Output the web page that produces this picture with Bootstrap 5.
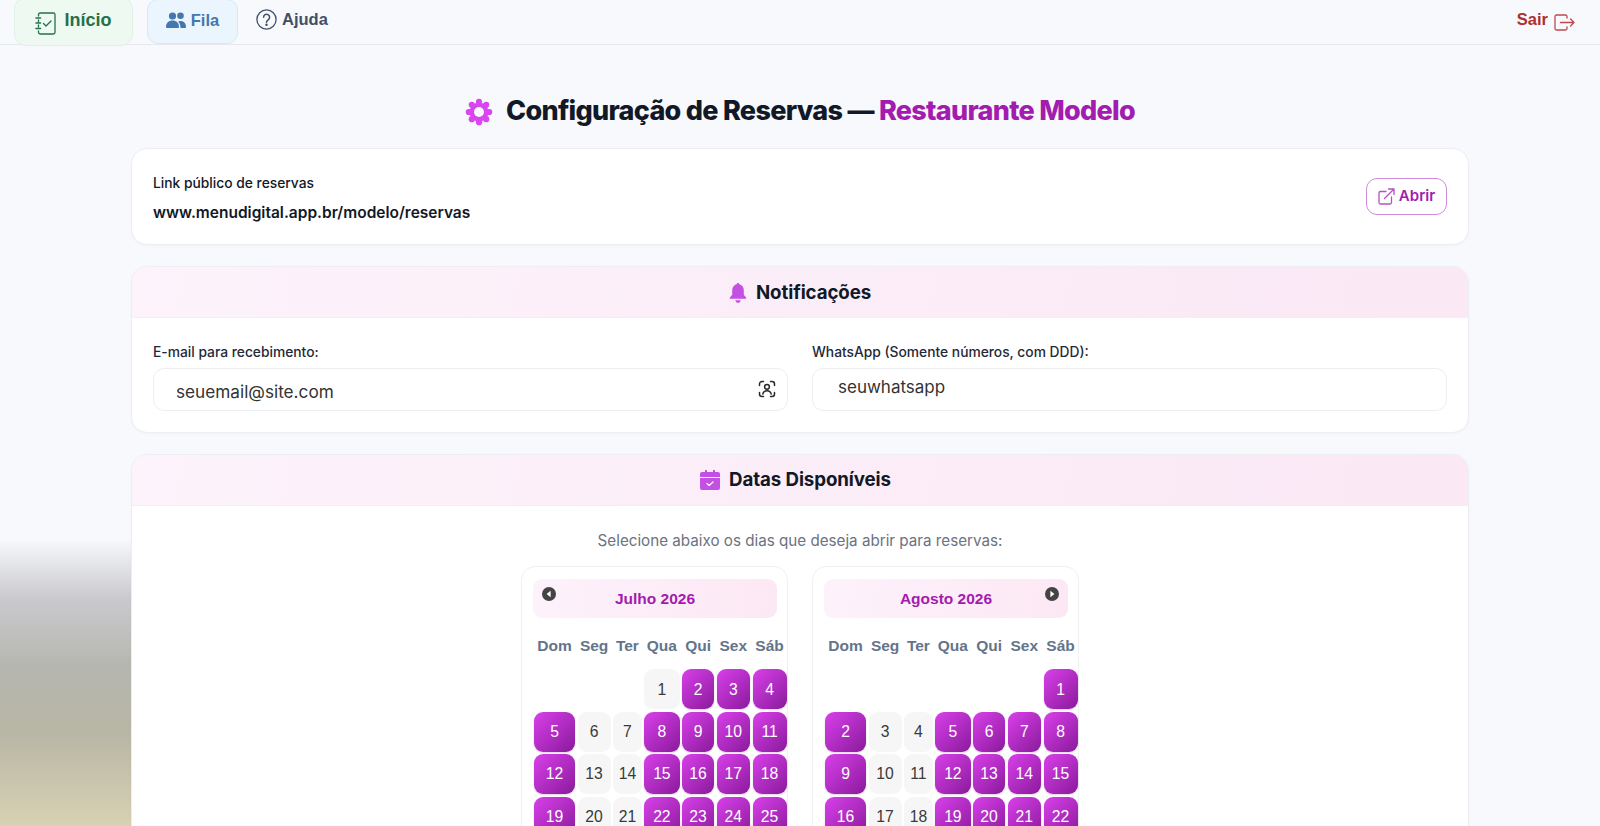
<!DOCTYPE html>
<html lang="pt-BR">
<head>
<meta charset="utf-8">
<title>Configuração de Reservas</title>
<link href="https://cdn.jsdelivr.net/npm/bootstrap@5.3.0/dist/css/bootstrap.min.css" rel="stylesheet">
<style>
html,body{height:826px;overflow:hidden}
body{font-family:"Inter","Liberation Sans",sans-serif;color:#111827;
 background-color:#f8f9fc;
 background-image:linear-gradient(180deg,#f7f8fb 0,#c9c9cd 60px,#b6b6b0 127px,#b8b6a5 193px,#d8d1b3 286px);
 background-repeat:no-repeat;background-position:0 540px;background-size:135px 286px}
.topbar{height:45px;border-bottom:1px solid #e6e8ee;padding:0 24px 0 14px;background:#f8f9fc}
.tab{font-family:"Liberation Sans",sans-serif;font-weight:700;display:flex;align-items:center;text-decoration:none;border:1px solid transparent}
.tab-home{width:119px;height:49px;margin-top:-3px;padding-bottom:2px;background:#edf9f1;border-color:#dff2e6;border-radius:12px;color:#25704a;font-size:18px;justify-content:center;gap:8px}
.tab-home svg{margin-top:6px}
.tab-queue{width:91px;height:45px;margin-left:14px;padding-bottom:3px;background:#ebf5fe;border-color:#d7e8f7;border-radius:11px;color:#4478ad;font-size:16.500px;justify-content:center;gap:5px;margin-top:-1px}
.tab-help{height:39px;color:#3f5068;font-size:16.500px;gap:5px;margin-left:17px}
.tab-exit{height:39px;color:#ad2f2f;font-size:16.500px;gap:6px}
.tab-exit svg{margin-top:5px}
.pagewrap{width:1338px;margin:0 auto}
.pagetitle{font-size:27px;font-weight:800;letter-spacing:-.71px;margin:0;height:103px;padding-top:30px;gap:13px}
.pagetitle span{color:#a21caf}
.sheet{background:#fff;border:1px solid #eceef3;border-radius:16px;box-shadow:0 1px 3px rgba(30,30,60,.03)}
.linkcard{height:97px;padding:0 21px;margin-bottom:21px}
.linklabel{font-size:13.800px;font-weight:500;margin-bottom:12px;line-height:17px;margin-top:3px}
.linkurl{font-size:15.500px;font-weight:600;line-height:18px}
.openbtn{width:81px;height:37px;border:1px solid #d08bdc;border-radius:11px;color:#a21caf;font-size:15px;font-weight:600;gap:4px;text-decoration:none}
.sheethead{height:51px;background:linear-gradient(100deg,#fdf3fb,#fae8f5);border-bottom:1px solid #f3eef4;border-radius:15px 15px 0 0;font-size:18.700px;font-weight:700;gap:9px;letter-spacing:-.1px}
.notifhead{padding-top:2px}
.dateshead{padding-right:9px}
.notifcard{height:167px;margin-bottom:21px}
.notifbody{padding:26px 21px 0;gap:24px}
.fieldlabel{font-size:13.800px;font-weight:500;line-height:17px;margin-bottom:7px;color:#1f2937}
.fieldbox{height:43px;border:1px solid #eceef2;border-radius:11px;font-size:17.200px;color:#333}
.fieldbox-mail{padding:5px 11px 0 22px}
.fieldbox-mail svg{margin-top:-6px}
.fieldbox-wa{padding:0 0 3px 25px;font-size:17px}
.datescard{height:600px}
.datesnote{font-size:15.200px;color:#6b7280;text-align:center;padding-top:25px;line-height:20px;margin-bottom:15px}
.calgroup{gap:24px}
.calbox{width:267px;border:1px solid #eff0f3;border-radius:14px;padding:12px 0 0 11px;height:400px}
.calhead{width:244px;height:39px;border-radius:9px;background:linear-gradient(100deg,#fdf2fb,#fce8f4);color:#a21caf;font-family:"Liberation Sans",sans-serif;font-weight:700;font-size:15.500px;margin-bottom:17px;padding-top:1px}
.navdot{position:absolute;top:8px;width:14px;height:14px}
.calgrid{display:grid;grid-template-columns:41px 33px 28.400px 35.400px 31.800px 33.400px 34px;column-gap:2.600px;row-gap:2.400px;font-family:"Liberation Sans",sans-serif;margin-left:1px}
.dayname{font-weight:700;font-size:15.500px;color:#64748b;text-align:center;height:21px;line-height:21px;margin-bottom:11px;white-space:nowrap}
.cell{height:40px;border-radius:9px;display:flex;align-items:center;justify-content:center;font-size:15.700px}
.cell-off{background:#f6f6f6;color:#3a3a3a}
.cell-on{background:linear-gradient(135deg,#d940ea,#8a1a9c);color:#fff;box-shadow:0 1px 2px rgba(90,20,110,.2)}
</style>
</head>
<body>
<nav class="topbar d-flex align-items-start justify-content-between">
  <div class="d-flex align-items-start">
    <a class="tab tab-home" href="#">
      <svg width="21" height="23" viewBox="0 0 21 23" fill="none" stroke="#25704a" stroke-width="1.3" stroke-linecap="round" stroke-linejoin="round"><path d="M3.500 4V2.800A1.800 1.800 0 0 1 5.300 1h12.900A1.800 1.800 0 0 1 20 2.800v17.400a1.800 1.800 0 0 1-1.800 1.800H5.300a1.800 1.800 0 0 1-1.800-1.800V19"/><path d="M3.500 8v2M3.500 13v2"/><path d="M1 6h4.500M1 11h4.500M1 16.500h4.500" stroke-width="1.600"/><path d="M8.500 11.500l2.500 2.500 5-5"/></svg>
      Início</a>
    <a class="tab tab-queue" href="#">
      <svg width="20" height="16" viewBox="0 0 20 16" fill="#4478ad"><circle cx="6.500" cy="4" r="3.600"/><circle cx="14.500" cy="3.800" r="3.300"/><path d="M0 15c0-4 2.500-6.500 6.500-6.500S13 11 13 15c0 .6-.4 1-1 1H1c-.6 0-1-.4-1-1z"/><path d="M14.500 16H19c.6 0 1-.4 1-1 0-3.600-2-6-5.500-6-1 0-1.800.2-2.500.6 1.500 1.300 2.400 3.200 2.500 6.400z"/></svg>
      Fila</a>
    <a class="tab tab-help" href="#">
      <svg width="21" height="21" viewBox="0 0 21 21" fill="none" stroke="#3f5068" stroke-width="1.300" stroke-linecap="round"><circle cx="10.500" cy="10.500" r="9.600"/><path d="M7.600 8.200a3 3 0 1 1 4.700 2.500c-1 .7-1.800 1.200-1.800 2.500" stroke-width="1.500"/><circle cx="10.500" cy="15.700" r=".6" fill="#3f5068"/></svg>
      Ajuda</a>
  </div>
  <a class="tab tab-exit" href="#">Sair
    <svg width="21" height="17" viewBox="0 0 21 17" fill="none" stroke="#c0474a" stroke-width="1.300" stroke-linecap="round" stroke-linejoin="round"><path d="M13 4V2.500A1.500 1.500 0 0 0 11.500 1h-9A1.500 1.500 0 0 0 1 2.500v12A1.500 1.500 0 0 0 2.500 16h9a1.500 1.500 0 0 0 1.500-1.500V13"/><path d="M6.500 8.500H20M16.500 5l3.500 3.500-3.500 3.500"/></svg>
  </a>
</nav>

<main class="pagewrap">
  <h1 class="pagetitle d-flex align-items-center justify-content-center">
    <svg width="28" height="28" viewBox="0 0 28 28"><g fill="#d946ef"><circle cx="14" cy="14" r="9.500"/><circle cx="14" cy="3.800" r="3.100"/><circle cx="14" cy="24.200" r="3.100"/><circle cx="3.800" cy="14" r="3.100"/><circle cx="24.200" cy="14" r="3.100"/><circle cx="6.800" cy="6.800" r="3.100"/><circle cx="21.200" cy="6.800" r="3.100"/><circle cx="6.800" cy="21.200" r="3.100"/><circle cx="21.200" cy="21.200" r="3.100"/></g><circle cx="14" cy="14" r="5" fill="#f8f9fc"/></svg>
    <div>Configuração de Reservas — <span>Restaurante Modelo</span></div>
  </h1>

  <section class="sheet linkcard d-flex align-items-center justify-content-between">
    <div>
      <div class="linklabel">Link público de reservas</div>
      <div class="linkurl">www.menudigital.app.br/modelo/reservas</div>
    </div>
    <a class="openbtn d-flex align-items-center justify-content-center" href="#">
      <svg width="17" height="17" viewBox="0 0 17 17" fill="none" stroke="#b84fc6" stroke-width="1.300" stroke-linecap="round" stroke-linejoin="round"><path d="M8 3.500H2.500A1.500 1.500 0 0 0 1 5v9.500A1.500 1.500 0 0 0 2.500 16H12a1.500 1.500 0 0 0 1.500-1.500V9"/><path d="M6.500 10.500L16 1M10.500 1H16v5.500"/></svg>
      Abrir</a>
  </section>

  <section class="sheet notifcard">
    <header class="sheethead notifhead d-flex align-items-center justify-content-center">
      <svg width="18" height="20" viewBox="0 0 17 19" fill="#c34fe3"><path d="M8.500 0c.8 0 1.300.6 1.300 1.300C12.400 2 14 4.200 14 7v4.200l2.200 2.500c.4.500.1 1.300-.6 1.300H1.400c-.7 0-1-.8-.6-1.300L3 11.200V7c0-2.800 1.600-5 4.200-5.700C7.200.6 7.700 0 8.500 0z"/><path d="M6 16.300h5c-.2 1.500-1.200 2.500-2.500 2.500S6.200 17.800 6 16.300z"/></svg>
      Notificações</header>
    <div class="notifbody d-flex">
      <div class="flex-fill w-50">
        <div class="fieldlabel">E-mail para recebimento:</div>
        <div class="fieldbox fieldbox-mail d-flex align-items-center justify-content-between"><span>seuemail@site.com</span>
          <svg width="18" height="18" viewBox="0 0 18 18" fill="none" stroke="#2b2b2b" stroke-width="1.500" stroke-linecap="round" stroke-linejoin="round"><path d="M1.500 5.500V4A2.500 2.500 0 0 1 4 1.500h1.500M12.500 1.500H14A2.500 2.500 0 0 1 16.500 4v1.500M16.500 12.500V14a2.500 2.500 0 0 1-2.500 2.500h-1.500M5.500 16.500H4A2.500 2.500 0 0 1 1.500 14v-1.500"/><circle cx="9" cy="6.800" r="2.400"/><path d="M4.800 14c.5-2.200 2-3.300 4.200-3.300s3.700 1.100 4.200 3.300"/></svg>
        </div>
      </div>
      <div class="flex-fill w-50">
        <div class="fieldlabel">WhatsApp (Somente números, com DDD):</div>
        <div class="fieldbox fieldbox-wa d-flex align-items-center">seuwhatsapp</div>
      </div>
    </div>
  </section>

  <section class="sheet datescard">
    <header class="sheethead dateshead d-flex align-items-center justify-content-center">
      <svg width="20" height="20" viewBox="0 0 20 20" fill="#c34fe3"><path d="M5 0h2v2h6V0h2v2h3a2 2 0 0 1 2 2v3H0V4a2 2 0 0 1 2-2h3z"/><path fill-rule="evenodd" d="M0 8h20v10a2 2 0 0 1-2 2H2a2 2 0 0 1-2-2z"/><path d="M7 13.500l2.200 2 3.800-3.500" fill="none" stroke="#fff" stroke-width="1.300" stroke-linecap="round" stroke-linejoin="round"/></svg>
      Datas Disponíveis</header>
    <p class="datesnote">Selecione abaixo os dias que deseja abrir para reservas:</p>
    <div class="calgroup d-flex justify-content-center" id="cals"></div>
  </section>
</main>

<script>
const names=['Dom','Seg','Ter','Qua','Qui','Sex','Sáb'];
const months=[{t:'Julho 2026',start:3,len:31,nav:'prev'},{t:'Agosto 2026',start:6,len:31,nav:'next'}];
const wrap=document.getElementById('cals');
months.forEach(m=>{
  const box=document.createElement('div');box.className='calbox';
  const arrow=m.nav==='prev'
    ?'<svg class="navdot" style="left:9px" viewBox="0 0 14 14"><circle cx="7" cy="7" r="7" fill="#444"/><path d="M8.600 3.800v6.400L4.600 7z" fill="#fff"/></svg>'
    :'<svg class="navdot" style="right:9px" viewBox="0 0 14 14"><circle cx="7" cy="7" r="7" fill="#444"/><path d="M5.400 3.800v6.400L9.400 7z" fill="#fff"/></svg>';
  let h='<div class="calhead position-relative d-flex align-items-center justify-content-center">'+arrow+m.t+'</div><div class="calgrid">';
  names.forEach(n=>h+='<div class="dayname">'+n+'</div>');
  for(let i=0;i<m.start;i++)h+='<div></div>';
  for(let d=1;d<=m.len;d++){
    const wd=(m.start+d-1)%7;
    const off=(wd===1||wd===2)||(m.t[0]==='J'&&(d===1));
    h+='<div class="cell '+(off?'cell-off':'cell-on')+'">'+d+'</div>';
  }
  box.innerHTML=h+'</div>';
  wrap.appendChild(box);
});
</script>
<script src="https://cdn.jsdelivr.net/npm/bootstrap@5.3.0/dist/js/bootstrap.bundle.min.js"></script>
</body>
</html>
